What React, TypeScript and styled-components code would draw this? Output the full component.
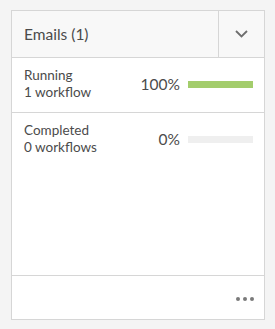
import React from "react";
import styled, { createGlobalStyle } from "styled-components";

const Global = createGlobalStyle`
  html, body { margin: 0; padding: 0; background: #f4f4f4; }
  body { font-family: Lato, "Open Sans", "Liberation Sans", sans-serif; color: #4b4b4b; }
`;

const Page = styled.div`
  padding: 10px 0 0 11px;
`;

const Card = styled.div`
  width: 254px;
  height: 310px;
  box-sizing: border-box;
  background: #fff;
  border: 1px solid #d6d6d6;
  box-shadow: 0 1px 0 #d6d6d6;
  display: flex;
  flex-direction: column;
`;

const Header = styled.div`
  height: 47px;
  box-sizing: border-box;
  display: flex;
  background: #f8f8f8;
  border-bottom: 1px solid #d6d6d6;
`;

const Title = styled.div`
  flex: 1;
  display: flex;
  align-items: center;
  padding-left: 12px;
  font-size: 15.5px;
  color: #4b4b4b;
`;

const ToggleButton = styled.div`
  width: 45px;
  border-left: 1px solid #d6d6d6;
  display: flex;
  align-items: center;
  justify-content: center;
`;

const Row = styled.div<{ $last?: boolean }>`
  height: 55px;
  box-sizing: border-box;
  display: flex;
  align-items: center;
  padding: 0 11px 2px 12px;
  border-bottom: 1px solid ${(p) => (p.$last ? "transparent" : "#d6d6d6")};
`;

const Labels = styled.div`
  flex: 1;
  display: flex;
  flex-direction: column;
  font-size: 13.5px;
  line-height: 17px;
`;

const Percent = styled.div`
  font-size: 15.5px;
  margin-right: 8px;
`;

const Track = styled.div`
  width: 65px;
  height: 7px;
  background: #efefef;
`;

const Fill = styled.div`
  height: 100%;
  background: #a3cd6c;
`;

const Spacer = styled.div`
  flex: 1;
`;

const Footer = styled.div`
  height: 43px;
  border-top: 1px solid #d6d6d6;
  display: flex;
  align-items: center;
  justify-content: flex-end;
  padding-right: 10px;
`;

const Dots = styled.div`
  display: flex;
  gap: 3px;
  padding-top: 2px;
`;

const Dot = styled.span`
  width: 4px;
  height: 4px;
  border-radius: 50%;
  background: #7a7a7a;
`;

const rows = [
  { label: "Running", sub: "1 workflow", pct: 100 },
  { label: "Completed", sub: "0 workflows", pct: 0 },
];

export default function App() {
  return (
    <>
      <Global />
      <Page>
        <Card>
          <Header>
            <Title>Emails (1)</Title>
            <ToggleButton>
              <svg width="13" height="8" viewBox="0 0 13 8">
                <path d="M1 1 L6.5 6.5 L12 1" fill="none" stroke="#6e6e6e" strokeWidth="1.8" />
              </svg>
            </ToggleButton>
          </Header>
          {rows.map((r, i) => (
            <Row key={r.label} $last={i === rows.length - 1}>
              <Labels>
                <span>{r.label}</span>
                <span>{r.sub}</span>
              </Labels>
              <Percent>{r.pct}%</Percent>
              <Track>
                <Fill style={{ width: `${r.pct}%` }} />
              </Track>
            </Row>
          ))}
          <Spacer />
          <Footer>
            <Dots>
              <Dot />
              <Dot />
              <Dot />
            </Dots>
          </Footer>
        </Card>
      </Page>
    </>
  );
}
